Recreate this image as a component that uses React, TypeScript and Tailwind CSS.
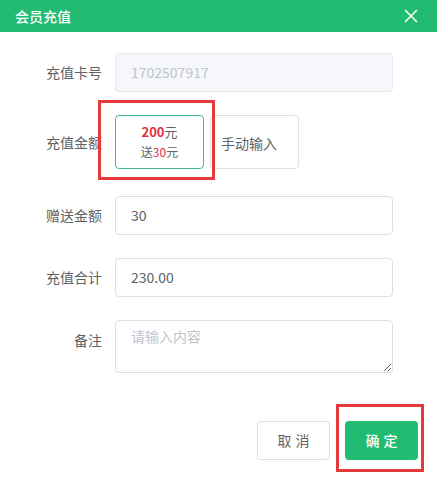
import { X } from "lucide-react"

const font = { fontFamily: '"Noto Sans CJK SC", "Liberation Sans", sans-serif' }

const Row = ({ label, children, className = "" }: { label: string; children: React.ReactNode; className?: string }) => (
  <div className={`flex items-center ${className}`}>
    <div className="w-[102px] shrink-0 text-right text-[14px] text-[#606266]">{label}</div>
    <div className="ml-[13px] w-[278px]">{children}</div>
  </div>
)

export default function App() {
  return (
    <div className="relative h-[480px] w-[437px] overflow-hidden bg-white" style={font}>
      <div className="flex h-8 items-center justify-between bg-[#21bb72] pl-[15px] pr-[15px]">
        <span className="text-[14px] font-medium text-white">会员充值</span>
        <X className="h-[22px] w-[22px] text-white" strokeWidth={1.7} />
      </div>

      <div className="pt-[21px]">
        <Row label="充值卡号">
          <div className="flex h-[39px] items-center rounded border border-[#e4e7ed] bg-[#f5f7fa] px-[15px] text-[14px] text-[#c0c4cc]">
            1702507917
          </div>
        </Row>

        <Row label="充值金额" className="mt-[23px]">
          <div className="flex gap-[6px]">
            <div className="flex h-[54px] w-[89px] flex-col items-center justify-center rounded border border-[#3fb98a] leading-[20px]">
              <div className="text-[13px] text-[#606266]">
                <span className="font-bold text-[#e0303e]">200</span>元
              </div>
              <div className="text-[12px] text-[#606266]">
                送<span className="text-[#e0303e]">30</span>元
              </div>
            </div>
            <div className="flex h-[54px] w-[89px] items-center rounded border border-[#dcdfe6] pl-[10px] pt-[3px] text-[14px] text-[#606266]">
              手动输入
            </div>
          </div>
        </Row>

        <Row label="赠送金额" className="mt-[27px]">
          <div className="flex h-[39px] items-center rounded border border-[#dcdfe6] px-[15px] text-[14px] text-[#606266]">
            30
          </div>
        </Row>

        <Row label="充值合计" className="mt-[23px]">
          <div className="flex h-[39px] items-center rounded border border-[#dcdfe6] px-[15px] text-[14px] text-[#606266]">
            230.00
          </div>
        </Row>

        <div className="mt-[23px] flex items-start">
          <div className="w-[102px] shrink-0 pt-[10px] text-right text-[14px] text-[#606266]">备注</div>
          <textarea
            placeholder="请输入内容"
            className="ml-[13px] h-[53px] w-[278px] resize-y rounded border border-[#dcdfe6] px-[15px] py-[5px] text-[14px] text-[#606266] outline-none placeholder:text-[#c0c4cc]"
            style={font}
          />
        </div>

        <div className="mt-[48px] flex justify-end gap-[15px] pr-[19px]">
          <button className="h-[39px] w-[73px] rounded border border-[#dcdfe6] bg-white pl-[4px] text-[14px] tracking-[4px] text-[#606266]">
            取消
          </button>
          <button className="h-[39px] w-[73px] rounded bg-[#21bb72] pl-[4px] text-[14px] font-medium tracking-[4px] text-white">
            确定
          </button>
        </div>
      </div>

      <div className="absolute left-[98px] top-[100px] h-[80px] w-[117px] border-[3px] border-[#e53a3a]" />
      <div className="absolute left-[336px] top-[404px] h-[68px] w-[88px] border-[3px] border-[#e53a3a]" />
    </div>
  )
}
